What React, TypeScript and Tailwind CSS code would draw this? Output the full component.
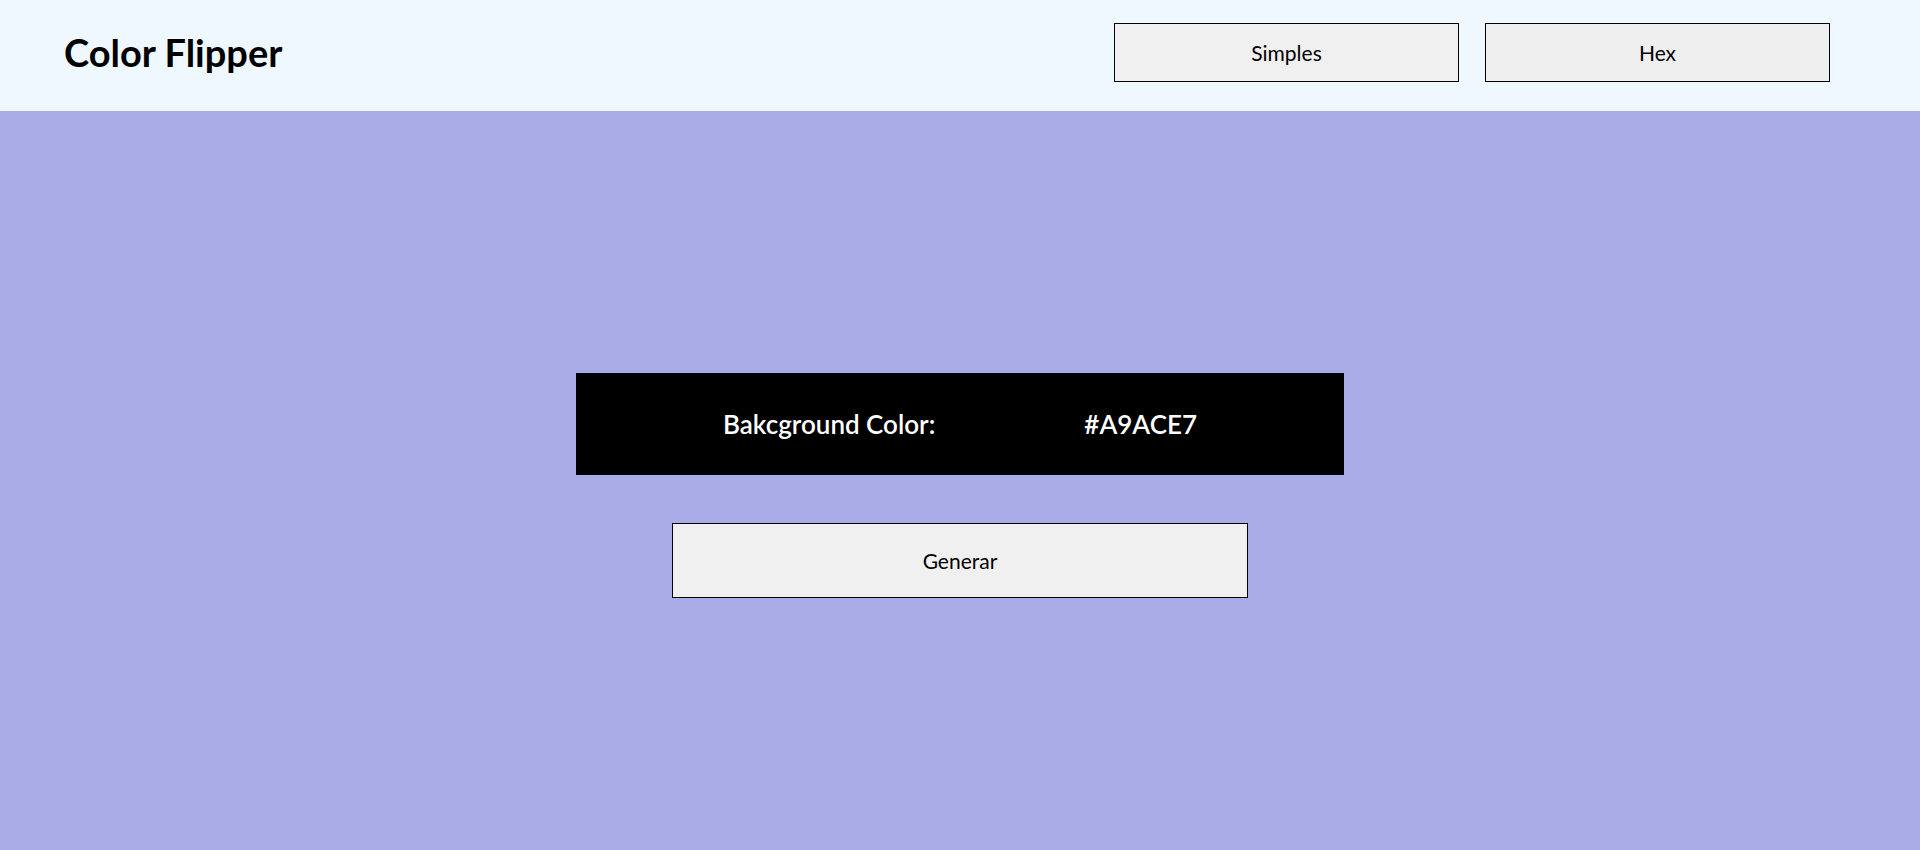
import { useState } from "react";

const simpleColors = ["#A9ACE7", "#F4A261", "#2A9D8F", "#E76F51", "#8AB17D"];

function randomHex() {
  const chars = "0123456789ABCDEF";
  let out = "#";
  for (let i = 0; i < 6; i++) out += chars[Math.floor(Math.random() * 16)];
  return out;
}

export default function App() {
  const [mode, setMode] = useState<"simple" | "hex">("hex");
  const [color, setColor] = useState("#A9ACE7");

  const generate = () => {
    if (mode === "hex") {
      setColor(randomHex());
    } else {
      setColor(simpleColors[Math.floor(Math.random() * simpleColors.length)]);
    }
  };

  return (
    <div className="min-h-screen flex flex-col font-['Lato',sans-serif] text-black">
      <header className="h-[111px] shrink-0 bg-[#F0F8FF] flex items-start justify-between pl-[64px] pr-[90px]">
        <h1 className="mt-[30px] text-[38px] font-bold leading-[44px]">Color Flipper</h1>
        <nav className="mt-[23px] flex gap-[26px]">
          <button
            type="button"
            onClick={() => setMode("simple")}
            className="w-[345px] h-[59px] border border-black bg-[#F0F0F0] text-[21px]"
          >
            Simples
          </button>
          <button
            type="button"
            onClick={() => setMode("hex")}
            className="w-[345px] h-[59px] border border-black bg-[#EFEFEF] text-[21px]"
          >
            Hex
          </button>
        </nav>
      </header>

      <main className="flex-1 flex flex-col items-center pt-[262px]" style={{ backgroundColor: color }}>
        <div className="w-[768px] h-[102px] bg-black text-white flex items-center justify-center gap-[149px] text-[26px] font-semibold">
          <span>Bakcground Color:</span>
          <span>{color}</span>
        </div>
        <button
          type="button"
          onClick={generate}
          className="mt-[48px] w-[576px] h-[75px] border border-black bg-[#F0F0F0] text-[21px]"
        >
          Generar
        </button>
      </main>
    </div>
  );
}
